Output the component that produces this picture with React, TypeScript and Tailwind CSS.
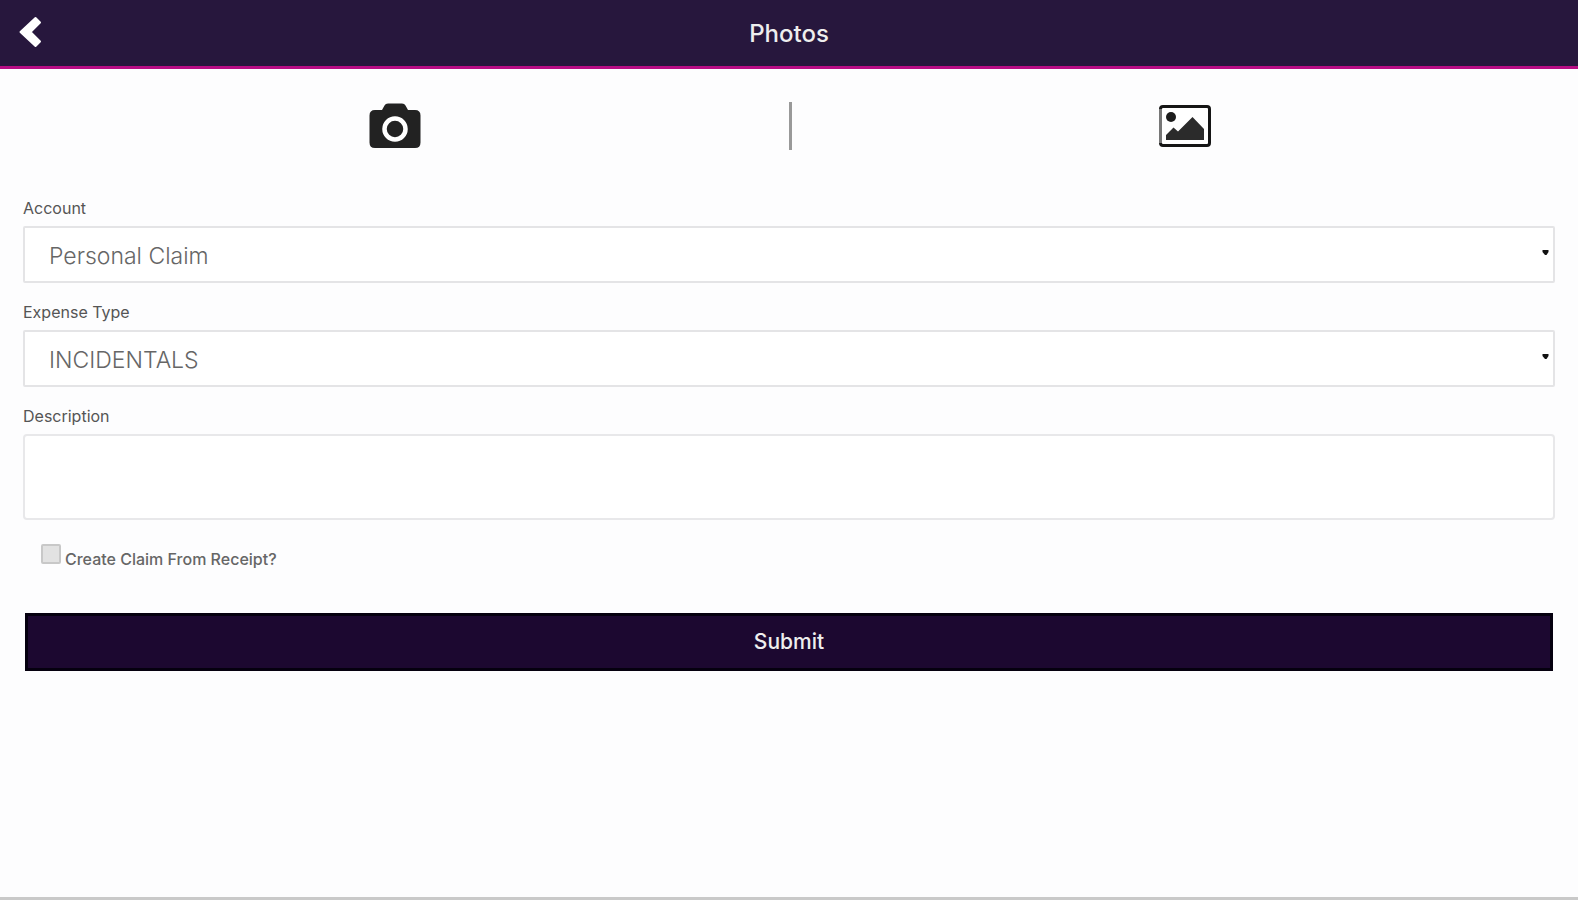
import { useState } from 'react'
import type { ReactNode } from 'react'

const ACCOUNTS = ['Personal Claim']
const EXPENSE_TYPES = ['INCIDENTALS']

function BackIcon() {
  return (
    <svg width="24" height="32" viewBox="0 0 24 32" fill="#fff" stroke="#fff" strokeWidth="2" strokeLinejoin="round" aria-hidden="true">
      <path d="M17.5 2 22 6.500 12.5 16 22 25.500 17.5 30 2.5 16Z" />
    </svg>
  )
}

function CameraIcon() {
  return (
    <svg width="52" height="46" viewBox="0 0 52 46" aria-hidden="true">
      <path
        d="M6 7H13L15.5 2.5Q16.5 .5 19 .5H33Q35.5 .5 36.5 2.5L39 7H46Q51.500 7 51.500 12.500V39.500Q51.500 45 46 45H6Q.5 45 .5 39.500V12.500Q.5 7 6 7Z"
        fill="#222"
      />
      <circle cx="26" cy="26" r="10.500" fill="#222" stroke="#fff" strokeWidth="4.500" />
    </svg>
  )
}

function PictureIcon() {
  return (
    <svg width="52" height="42" viewBox="0 0 52 42" aria-hidden="true">
      <rect x="1.500" y="1.500" width="49" height="39" rx="2.500" fill="#fff" stroke="#151515" strokeWidth="3" />
      <path d="M1.500 4V38" stroke="#777" strokeWidth="3" />
      <circle cx="12" cy="12" r="5" fill="#1c1c1c" />
      <path d="M7 35V30L14.500 22.500 19 26.500 33.500 12 45 24V35Z" fill="#2b2b2b" />
    </svg>
  )
}

function Field({ id, label, children }: { id: string; label: string; children: ReactNode }) {
  return (
    <div className="flex flex-col">
      <label htmlFor={id} className="mb-[6px] text-base leading-6 text-[#555]">{label}</label>
      {children}
    </div>
  )
}

function SelectBox({ id, value, options, onChange }: { id: string; value: string; options: string[]; onChange: (value: string) => void }) {
  return (
    <div className="relative">
      <select
        id={id}
        value={value}
        onChange={(e) => onChange(e.target.value)}
        className="block h-[57px] w-full appearance-none rounded-xs border-2 border-[#e4e4e6] bg-white pt-1 pr-8 pl-6 text-[23px] font-light text-[#666] outline-none"
      >
        {options.map((option) => (
          <option key={option} value={option}>{option}</option>
        ))}
      </select>
      <svg className="pointer-events-none absolute top-6 right-[6px]" width="7" height="6" viewBox="0 0 7 6" aria-hidden="true">
        <path d="M.5 0H6.500V2L4.500 5H3L.5 2Z" fill="#111" />
      </svg>
    </div>
  )
}

export default function App() {
  const [account, setAccount] = useState(ACCOUNTS[0])
  const [expenseType, setExpenseType] = useState(EXPENSE_TYPES[0])
  const [description, setDescription] = useState('')
  const [createClaim, setCreateClaim] = useState(false)

  return (
    <div className="flex min-h-screen flex-col border-b-3 border-[#c9c9c9] bg-[#fdfdfe] font-['Inter','Liberation_Sans',sans-serif]">
      <header className="grid grid-cols-[1fr_auto_1fr] items-center border-b-3 border-[#b80d85] bg-[#27173d] px-[18px] pt-4 pb-[18px]">
        <button type="button" aria-label="Back" className="justify-self-start">
          <BackIcon />
        </button>
        <h1 className="pt-1 text-2xl leading-7 font-medium text-[#eee]">Photos</h1>
      </header>

      <div className="grid grid-cols-2 pt-[33px]">
        <div className="flex h-12 items-center justify-center">
          <button type="button" aria-label="Take photo">
            <CameraIcon />
          </button>
        </div>
        <div className="flex h-12 items-center justify-center border-l-3 border-[#999]">
          <button type="button" aria-label="Choose picture">
            <PictureIcon />
          </button>
        </div>
      </div>

      <form onSubmit={(e) => e.preventDefault()} className="px-[23px] pt-[46px]">
        <div className="flex flex-col gap-[17px]">
          <Field id="account" label="Account">
            <SelectBox id="account" value={account} options={ACCOUNTS} onChange={setAccount} />
          </Field>
          <Field id="expense-type" label="Expense Type">
            <SelectBox id="expense-type" value={expenseType} options={EXPENSE_TYPES} onChange={setExpenseType} />
          </Field>
          <Field id="description" label="Description">
            <textarea
              id="description"
              value={description}
              onChange={(e) => setDescription(e.target.value)}
              className="block h-[86px] w-full resize-none rounded-sm border-2 border-[#e8e8ea] bg-white px-6 py-3 text-[23px] font-light text-[#666] outline-none"
            />
          </Field>
        </div>

        <div className="mt-6 flex items-start gap-1 pl-[18px]">
          <input
            id="create-claim"
            type="checkbox"
            checked={createClaim}
            onChange={(e) => setCreateClaim(e.target.checked)}
            className="size-5 appearance-none rounded-xs border-2 border-[#c8c8c8] bg-[#e2e2e2] checked:bg-[#1c0830]"
          />
          <label htmlFor="create-claim" className="pt-[3px] text-base leading-6 font-medium text-[#666]">Create Claim From Receipt?</label>
        </div>

        <div className="mt-[42px] px-[2px]">
          <button type="submit" className="block w-full border-3 border-[#05000f] bg-[#1c0830] py-3 text-[21px] leading-7 font-medium text-[#eee]">
            Submit
          </button>
        </div>
      </form>
    </div>
  )
}
